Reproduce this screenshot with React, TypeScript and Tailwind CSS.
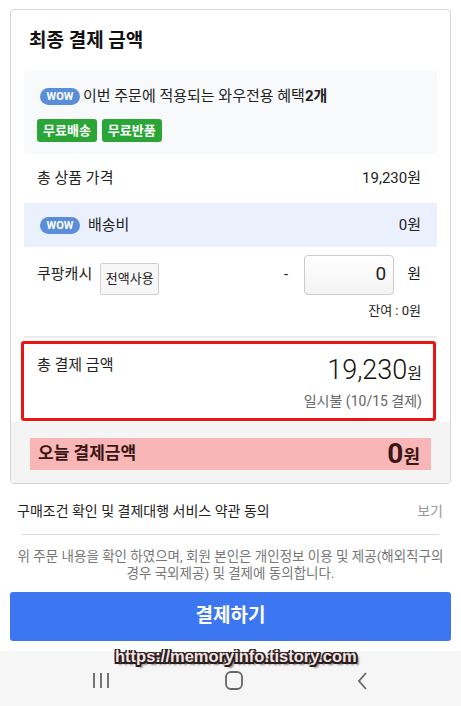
import * as React from "react";

const KR = { fontFamily: "Roboto, 'Noto Sans CJK KR', sans-serif" };

const WowBadge = () => (
  <span className="inline-flex h-[17px] w-[40px] items-center justify-center rounded-full bg-[#5a8ed8] text-[11px] font-bold leading-none text-white">
    WOW
  </span>
);

const Tag = ({ label }: { label: string }) => (
  <span className="inline-flex h-[23px] items-center rounded-[3px] bg-[#2ba636] px-[6px] text-[13px] font-bold text-white">
    {label}
  </span>
);

export default function App() {
  return (
    <div
      className="relative flex h-[706px] w-[461px] flex-col overflow-hidden bg-white text-[#222]"
      style={KR}
    >
      <div className="px-[10px] pt-[9px]">
        <div className="overflow-hidden rounded-[4px] border border-[#d4d4d4]">
          <div className="pb-[16px] pl-[18px] pt-[17px] text-[19px] font-bold leading-[28px] text-[#111]">
            최종 결제 금액
          </div>

          <div className="mx-[13px]">
            <div className="flex h-[83px] flex-col rounded-[4px] bg-[#f8f9fb] pl-[13px] pt-[16px]">
              <div className="flex items-center gap-[3px] pl-[3px] text-[15px] leading-[18px]">
                <WowBadge />
                <span>
                  이번 주문에 적용되는 와우전용 혜택<b>2개</b>
                </span>
              </div>
              <div className="mt-[14px] flex gap-[5px]">
                <Tag label="무료배송" />
                <Tag label="무료반품" />
              </div>
            </div>

            <div className="flex h-[49px] items-center justify-between pl-[13px] pr-[16px] text-[15px]">
              <span>총 상품 가격</span>
              <span>19,230원</span>
            </div>

            <div className="flex h-[44px] items-center justify-between bg-[#eaf1fc] pl-[16px] pr-[16px] text-[15px]">
              <span className="flex items-center gap-[8px]">
                <WowBadge />
                배송비
              </span>
              <span>0원</span>
            </div>

            <div className="flex h-[51px] items-center pl-[13px] pr-[16px] pt-[4px] text-[15px]">
              <span>쿠팡캐시</span>
              <span className="ml-[8px] mt-[8px] flex h-[32px] w-[59px] items-center justify-center rounded-[2px] border border-[#cfcfcf] bg-[#f7f7f7] text-[13px]">
                전액사용
              </span>
              <span className="ml-auto mr-[16px] text-[15px]">-</span>
              <span className="flex h-[40px] w-[90px] items-center justify-end rounded-[4px] border border-[#cccccc] bg-gradient-to-b from-white to-[#f3f3f3] pr-[7px] text-[19px]">
                0
              </span>
              <span className="ml-[13px]">원</span>
            </div>

            <div className="flex h-[26px] items-center justify-end pr-[16px] text-[13px]">
              잔여 : 0원
            </div>

            <div className="mt-[12px] h-[2px] bg-[#ececec]" />
          </div>

          <div className="ml-[10px] mr-[14px] mt-[3px] h-[80px] rounded-[3px] border-[3px] border-[#ec1313] pl-[13px] pr-[11px]">
            <div className="flex items-start justify-between pt-[10px]">
              <span className="text-[15px] leading-[22px]">총 결제 금액</span>
              <span className="flex items-baseline leading-[32px]">
                <span className="text-[27px] font-light text-[#111]">19,230</span>
                <span className="text-[16px]">원</span>
              </span>
            </div>
            <div className="mt-[1px] text-right text-[14px] leading-[20px] text-[#666]">
              일시불 (10/15 결제)
            </div>
          </div>

          <div className="mt-[1px] bg-[#f4f4f4] px-[19px] pb-[13px] pt-[16px]">
            <div className="flex h-[32px] items-center justify-between bg-[#f8b6b6] pl-[8px] pr-[11px] text-[#3b1616]">
              <span className="text-[17px] font-bold">오늘 결제금액</span>
              <span className="flex items-baseline font-bold">
                <span className="text-[28px] leading-[30px]">0</span>
                <span className="text-[18px]">원</span>
              </span>
            </div>
          </div>
        </div>
      </div>

      <div className="mt-[15px] flex h-[24px] items-center justify-between pl-[17px] pr-[18px] text-[14px]">
        <span className="text-[#222]">구매조건 확인 및 결제대행 서비스 약관 동의</span>
        <span className="text-[#999]">보기</span>
      </div>
      <div className="mx-[22px] mt-[11px] h-px bg-[#dedede]" />
      <div className="mt-[13px] px-[4px] text-center text-[13.5px] leading-[17px] text-[#777]">
        위 주문 내용을 확인 하였으며, 회원 본인은 개인정보 이용 및 제공(해외직구의
        <br />
        경우 국외제공) 및 결제에 동의합니다.
      </div>

      <div className="mx-[10px] mt-[10px] flex h-[49px] items-center justify-center rounded-[3px] bg-[#3c77f1] text-[19px] font-bold text-white">
        결제하기
      </div>

      <div className="mt-[10px] flex flex-1 items-center justify-between bg-[#f6f6f6] pl-[92px] pr-[93px] pt-[4px]">
        <svg width="18" height="17" viewBox="0 0 18 17">
          <path d="M2 1v15M9 1v15M16 1v15" stroke="#666" strokeWidth="1.8" />
        </svg>
        <svg width="18" height="19" viewBox="0 0 18 19">
          <rect x="1" y="1" width="16" height="17" rx="5" fill="none" stroke="#666" strokeWidth="1.8" />
        </svg>
        <svg width="11" height="18" viewBox="0 0 11 18">
          <path d="M9 1L2 9l7 8" fill="none" stroke="#666" strokeWidth="1.8" />
        </svg>
      </div>

      <div
        className="absolute left-[115px] top-[645px] text-[16.5px] font-bold leading-[22px] text-[#f3e4e4]"
        style={{
          fontFamily: "'Liberation Sans', sans-serif",
          textShadow:
            "-1.5px -1.5px 0 #2a1d1d, 1.5px -1.5px 0 #2a1d1d, -1.5px 1.5px 0 #2a1d1d, 1.5px 1.5px 0 #2a1d1d, 0 2px 0 #2a1d1d, 2px 0 0 #2a1d1d, 3px 3px 2px rgba(0,0,0,0.5)",
        }}
      >
        https://memoryinfo.tistory.com
      </div>
    </div>
  );
}
